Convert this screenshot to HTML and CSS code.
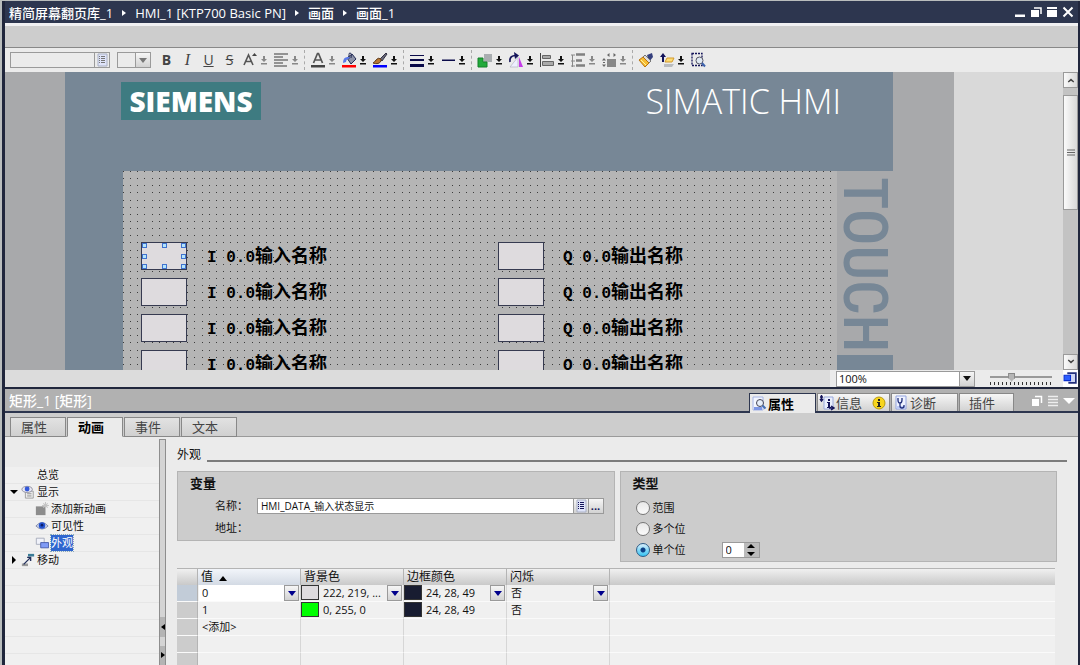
FILE: index.html
```html
<!DOCTYPE html>
<html lang="zh-CN">
<head>
  <meta charset="UTF-8">
  <meta name="viewport" content="width=device-width, initial-scale=1.0">
  <title>画面_1</title>
  <link rel="stylesheet" href="styles.css">
</head>
<body>
  <svg class="sprite" aria-hidden="true">
    <symbol id="drop" viewBox="0 0 8 16">
      <path d="M3 4h2v3h2L4 10 1 7h2zM1 11h6v1.5H1z" fill="currentColor"/>
    </symbol>
    <symbol id="caret" viewBox="0 0 8 5">
      <path d="M0 0h8L4 5z" fill="currentColor"/>
    </symbol>
    <symbol id="list" viewBox="0 0 14 14">
      <path d="M3 1h9v12H3z" fill="#dfe4fa" stroke="#a9b0c4"/>
      <path d="M4 3.500h1m1 0h4M4 5.500h1m1 0h4M4 7.500h1m1 0h4M4 9.500h1m1 0h4" stroke="currentColor"/>
    </symbol>
  </svg>

  <div class="window">
    <header class="titlebar">
      <nav class="path">
        <a href="#">精简屏幕翻页库_1</a><i></i>
        <a href="#">HMI_1 [KTP700 Basic PN]</a><i></i>
        <a href="#">画面</a><i></i>
        <a href="#">画面_1</a>
      </nav>
      <div class="win-buttons">
        <button aria-label="最小化"><svg viewBox="0 0 12 12"><path d="M1 8.500h10V11H1z" fill="#fff"/></svg></button>
        <button aria-label="还原"><svg viewBox="0 0 12 12"><path d="M1 4h8v7H1z" fill="#fff"/><path d="M4 2h7v6" fill="none" stroke="#fff" stroke-width="1.5"/></svg></button>
        <button aria-label="最大化"><svg viewBox="0 0 12 12"><path d="M1 1h10v2H1zM1 4h10v7H1z" fill="#fff"/></svg></button>
        <button aria-label="关闭"><svg viewBox="0 0 12 12"><path d="M1.500 1.500l9 9m0-9l-9 9" stroke="#fff" stroke-width="2"/></svg></button>
      </div>
    </header>
    <div class="strip"></div>

    <div class="toolbar">
      <div class="font-name">
        <input type="text" aria-label="字体"><button aria-label="选择字体"><svg width="14" height="14"><use href="#list"/></svg></button>
      </div>
      <div class="font-size">
        <select aria-label="字号"><option></option></select><span class="arrow"><svg width="8" height="5"><use href="#caret"/></svg></span>
      </div>
      <button class="tool letter"><b>B</b></button>
      <button class="tool letter"><em>I</em></button>
      <button class="tool letter"><u>U</u></button>
      <button class="tool letter"><s>S</s></button>
      <button class="tool pair off" aria-label="字体大小">
        <svg class="icon" viewBox="0 0 16 16"><path d="M2 13L6.500 3 11 13M3.500 9.500h6" fill="none" stroke="#555" stroke-width="1.6"/><path d="M10 4l2.500-3L15 4z" fill="#444"/></svg>
        <svg class="drop"><use href="#drop"/></svg>
      </button>
      <button class="tool pair off" aria-label="对齐">
        <svg class="icon" viewBox="0 0 16 16"><path d="M1 2h14M1 5h9M1 8h14M1 11h9M1 14h13" stroke="#777" stroke-width="1.5"/></svg>
        <svg class="drop"><use href="#drop"/></svg>
      </button>
      <span class="sep"></span>
      <button class="tool pair off" aria-label="文本颜色">
        <svg class="icon" viewBox="0 0 16 16"><path d="M3.500 11L7.500 1.500h1L12.500 11M5 8h6" fill="none" stroke="#555" stroke-width="1.7"/><path d="M1 13h14v2.500H1z" fill="#444"/></svg>
        <svg class="drop"><use href="#drop"/></svg>
      </button>
      <button class="tool pair" aria-label="背景颜色">
        <svg class="icon" viewBox="0 0 16 16"><path d="M6 6l5-4 4 5-5 5z" fill="#8d93a8" stroke="#222a55"/><path d="M8 7V2.500q0-2 1.500-1.500T10 6" fill="none" stroke="#222a55"/><path d="M8 5Q2 4 2 11l3-1q0-3 4-4z" fill="#5b79ea"/><path d="M1 13h14v2.500H1z" fill="red"/></svg>
        <svg class="drop"><use href="#drop"/></svg>
      </button>
      <button class="tool pair" aria-label="边框颜色">
        <svg class="icon" viewBox="0 0 16 16"><path d="M8 7l6-6 1 1-5 7z" fill="#667" stroke="#334"/><path d="M9 7q-3-2-5 1t-3 3q6 2 8-2z" fill="#b87834" stroke="#5c3a1c"/><path d="M1 13h14v2.500H1z" fill="#00f"/></svg>
        <svg class="drop"><use href="#drop"/></svg>
      </button>
      <span class="sep"></span>
      <button class="tool pair" aria-label="线宽">
        <svg class="icon" viewBox="0 0 16 16"><path d="M1 3h14v1H1zM1 7h14v2H1zM1 12h14v3H1z" fill="#0b0b4a"/></svg>
        <svg class="drop"><use href="#drop"/></svg>
      </button>
      <button class="tool pair" aria-label="线型">
        <svg class="icon" viewBox="0 0 16 16"><path d="M2 7.500h13v1.500H2z" fill="#0b0b4a"/></svg>
        <svg class="drop"><use href="#drop"/></svg>
      </button>
      <span class="sep"></span>
      <button class="tool pair" aria-label="层级">
        <svg class="icon" viewBox="0 0 16 16"><path d="M7 2h8v8H7z" fill="#a9adb0"/><path d="M1 6h5v4h4v5H1z" fill="#22aa3b" stroke="#15802a"/></svg>
        <svg class="drop"><use href="#drop"/></svg>
      </button>
      <button class="tool pair" aria-label="旋转">
        <svg class="icon" viewBox="0 0 16 16"><path d="M2 10Q1 4 7 3.500" fill="none" stroke="#14145a" stroke-width="1.7"/><path d="M6 0l5 3.500L7 7z" fill="#14145a"/><path d="M10 5v10H2z" fill="#eef" stroke="#aab" stroke-width=".6"/><path d="M11 5l4 10h-4z" fill="#c43ce8"/></svg>
        <svg class="drop"><use href="#drop"/></svg>
      </button>
      <button class="tool pair" aria-label="左对齐">
        <svg class="icon" viewBox="0 0 16 16"><path d="M1.500 1v14" stroke="#444"/><path d="M3.500 3.500h8v3h-8zM3.500 9.500h11v4h-11z" fill="#aaa" stroke="#666"/></svg>
        <svg class="drop"><use href="#drop"/></svg>
      </button>
      <button class="tool pair off" aria-label="分布">
        <svg class="icon" viewBox="0 0 16 16"><path d="M2.500 3v12M1 3h4M1 9h4M1 14h4" stroke="#888"/><path d="M6 2.500h9M6 8.500h6M6 13.500h9" stroke="#808080" stroke-width="2.500"/></svg>
        <svg class="drop"><use href="#drop"/></svg>
      </button>
      <button class="tool pair off" aria-label="尺寸">
        <svg class="icon" viewBox="0 0 16 16"><path d="M6 7h9v8H6z" fill="#888"/><path d="M6 3l2.500-2v4zM15 3l-2.500-2v4zM3 6L1 8.500h4zM3 15l-2-2.500h4z" fill="#666"/><path d="M2 10.500h2" stroke="#666"/></svg>
        <svg class="drop"><use href="#drop"/></svg>
      </button>
      <span class="sep"></span>
      <button class="tool" aria-label="格式刷">
        <svg class="icon" viewBox="0 0 16 16"><path d="M9 3l5-2 1 4-4 5z" fill="#35407e"/><path d="M7 3l6 6-2 2-6-6z" fill="#ddd" stroke="#777"/><path d="M5 5l6 6-4 4-6-7z" fill="#f7bd32" stroke="#b87310"/><path d="M3 8l5 5" stroke="#fff3a0"/></svg>
      </button>
      <button class="tool pair" aria-label="图层">
        <svg class="icon" viewBox="0 0 16 16"><path d="M5 12h10l-2 3H5z" fill="#b9bcc0"/><path d="M8 6h7l-2 4H6z" fill="#fbdc77" stroke="#d59b2a"/><path d="M1 5l3-4 3 4H5v5H3V5z" fill="#14145a"/></svg>
        <svg class="drop"><use href="#drop"/></svg>
      </button>
      <button class="tool" aria-label="缩放选区">
        <svg class="icon" viewBox="0 0 16 16"><path d="M2 1.500h10v12H2z" fill="none" stroke="#14145a" stroke-width="1.3" stroke-dasharray="2 1"/><circle cx="9.500" cy="8.500" r="3.500" fill="#dfe8f2" stroke="#556"/><path d="M12 11l3 3.500" stroke="#3c63ad" stroke-width="2"/></svg>
      </button>
    </div>

    <main class="editor">
      <div class="canvas">
        <div class="device">
          <div class="panel">
            <div class="panel-head">
              <span class="logo">SIEMENS</span>
              <span class="product">SIMATIC HMI</span>
            </div>
            <div class="panel-body">
              <div class="screen">
                <svg class="dots" aria-hidden="true">
                  <pattern id="grid" width="50" height="50" patternUnits="userSpaceOnUse">
                    <path d="M0 .5h50M0 7.500h50M0 14.500h50M0 21.500h50M0 29.500h50M0 36.500h50M0 43.500h50" stroke="#3c3c3c" stroke-dasharray="1 6 1 6 1 6 1 7 1 6 1 6 1 6"/>
                  </pattern>
                  <rect width="100%" height="100%" fill="url(#grid)"/>
                </svg>
                <div class="io">
                  <span class="lamp selected"><i></i><i></i><i></i><i></i><i></i><i></i><i></i><i></i></span>
                  <span class="name"><code>I 0.0</code>输入名称</span>
                  <span class="lamp"></span>
                  <span class="name"><code>Q 0.0</code>输出名称</span>
                  <span class="lamp"></span>
                  <span class="name"><code>I 0.0</code>输入名称</span>
                  <span class="lamp"></span>
                  <span class="name"><code>Q 0.0</code>输出名称</span>
                  <span class="lamp"></span>
                  <span class="name"><code>I 0.0</code>输入名称</span>
                  <span class="lamp"></span>
                  <span class="name"><code>Q 0.0</code>输出名称</span>
                  <span class="lamp"></span>
                  <span class="name"><code>I 0.0</code>输入名称</span>
                  <span class="lamp"></span>
                  <span class="name"><code>Q 0.0</code>输出名称</span>
                </div>
              </div>
              <div class="side"><span>TOUCH</span></div>
            </div>
          </div>
        </div>
      </div>
      <div class="scrollbar">
        <button aria-label="向上"><svg viewBox="0 0 10 8"><path d="M1 6l4-4 4 4-1 1-3-2-3 2z" fill="#444"/></svg></button>
        <div class="thumb"><svg viewBox="0 0 8 8"><path d="M0 1h8M0 3.500h8M0 6h8" stroke="#666" stroke-width="1.2"/></svg></div>
        <button aria-label="向下"><svg viewBox="0 0 10 8"><path d="M1 2l4 4 4-4-1-1-3 2-3-2z" fill="#444"/></svg></button>
      </div>
    </main>

    <div class="zoombar">
      <div class="zoom">
        <select aria-label="缩放"><option>100%</option></select><span class="arrow"><svg width="8" height="5"><use href="#caret"/></svg></span>
      </div>
      <input class="slider" type="range" min="0" max="100" value="33" aria-label="缩放比例">
      <button class="overview" aria-label="总览"><svg viewBox="0 0 14 14"><path d="M4 2h8v9H5" fill="#cfd6f2" stroke="#23307c" stroke-width="1.6"/><path d="M1 4h6v5H1z" fill="#2a5cff" stroke="#0a2fd0"/></svg></button>
    </div>

    <section class="inspector">
      <div class="inspector-head">
        <h1>矩形_1 [矩形]</h1>
        <div class="views">
          <button class="view active">
            <svg viewBox="0 0 16 16"><path d="M2 1h10v13H2z" fill="#f3f6ff" stroke="#a6b4e6"/><path d="M3 11h8v3H3z" fill="#7d97e6"/><circle cx="9" cy="7" r="3.500" fill="#e6eefa" stroke="#445"/><path d="M11.500 9.500l3 3" stroke="#456fb5" stroke-width="2"/></svg>属性
          </button>
          <button class="view message">
            <svg viewBox="0 0 16 16"><path d="M5 2h9v12H5z" fill="#e9eefc" stroke="#9aa9dd"/><path d="M9 4h2v2H9zM8 7h3v5h1v1H8v-1h1V8H8z" fill="#14145a"/><path d="M1 2h3M2.500 0v6M1 4l1.500 2L4 4M10 13h4m-2-2l3 2-3 2" fill="none" stroke="#14145a" stroke-width="1.4"/></svg>信息
            <svg class="info" viewBox="0 0 16 16"><circle cx="8" cy="8" r="6" fill="#f7d51d" stroke="#b89a10"/><path d="M7 4h2v2H7zM6 7h3v4h1v1H6v-1h1V8H6z" fill="#222"/></svg>
          </button>
          <button class="view">
            <svg viewBox="0 0 16 16"><path d="M3 1h10v13H3z" fill="#eef2ff" stroke="#93a4e0"/><path d="M4 11h8v3H4z" fill="#bccaf6"/><path d="M5 3v2q0 3 2 3t2-3V3M7 8v3q0 2 2 2t2-2v-1" fill="none" stroke="#23307c" stroke-width="1.300"/></svg>诊断
          </button>
          <button class="view plain">插件</button>
        </div>
        <div class="dock">
          <button aria-label="浮动"><svg viewBox="0 0 12 12"><path d="M1 4h7v7H1z" fill="#fff"/><path d="M4 1.500h6.500V8" fill="none" stroke="#fff" stroke-width="1.500"/></svg></button>
          <button aria-label="布局"><svg viewBox="0 0 12 12"><path d="M1 1.500h10M1 4.500h10M1 7.500h10M1 10.500h10" stroke="#eee" stroke-width="1.300"/></svg></button>
          <button aria-label="折叠"><svg viewBox="0 0 12 12"><path d="M0 3h12L6 9z" fill="#fff"/></svg></button>
        </div>
      </div>

      <div class="tabs">
        <button>属性</button>
        <button class="active">动画</button>
        <button>事件</button>
        <button>文本</button>
      </div>

      <div class="split">
        <ul class="tree">
          <li><a href="#">总览</a></li>
          <li>
            <svg class="twist" viewBox="0 0 8 8"><path d="M0 2h8L4 6z"/></svg>
            <svg class="icon" viewBox="0 0 16 16"><path d="M5 7h9v8H5z" fill="#ececec" stroke="#999"/><path d="M7 10h5M7 12.500h5" stroke="#888"/><ellipse cx="7" cy="5" rx="6" ry="3.500" fill="#e8e8f4" stroke="#889"/><circle cx="7" cy="4.500" r="2.800" fill="#3358d8"/></svg>
            <a href="#">显示</a>
          </li>
          <li class="child">
            <svg class="icon" viewBox="0 0 16 16"><path d="M1 5h11v10H1z" fill="#8c8c8c"/><path d="M12 0v8M8 4h8M9.500 1.500l5 5m0-5l-5 5" stroke="#c4c4c4" stroke-width="1.200"/></svg>
            <a href="#">添加新动画</a>
          </li>
          <li class="child">
            <svg class="icon" viewBox="0 0 16 16"><path d="M1 8q7-8 14 0-7 7-14 0z" fill="#cfd6ea" stroke="#7b86a8"/><circle cx="8" cy="7.500" r="3.700" fill="#2352d0"/><circle cx="8" cy="7" r="1.500" fill="#0a1e6a"/></svg>
            <a href="#">可见性</a>
          </li>
          <li class="child">
            <svg class="icon" viewBox="0 0 16 16"><path d="M1.500 2.500h9v7h-9z" fill="#f0f2fa" stroke="#a4a8b8"/><path d="M6.500 7.500h9v6h-9z" fill="#7f9af5" stroke="#4257a8"/></svg>
            <a href="#" class="current">外观</a>
          </li>
          <li>
            <svg class="twist" viewBox="0 0 8 8"><path d="M2 0v8l4-4z"/></svg>
            <svg class="icon" viewBox="0 0 16 16"><path d="M8 1h7v3H8z" fill="#3b7c96"/><path d="M1 12h7v3H1z" fill="#999"/><path d="M3 13L11 5M7 5h4v4" fill="none" stroke="#23305c" stroke-width="1.600"/></svg>
            <a href="#">移动</a>
          </li>
          <li></li><li></li><li></li><li></li><li></li><li></li>
        </ul>
        <div class="splitter">
          <button aria-label="收起"><svg viewBox="0 0 4 6"><path d="M4 0v6L0 3z"/></svg></button>
          <button aria-label="展开"><svg viewBox="0 0 4 6"><path d="M0 0v6l4-3z"/></svg></button>
        </div>

        <div class="content">
          <h2>外观</h2>
          <div class="groups">
            <fieldset class="group variable">
              <h3>变量</h3>
              <div class="field">
                <label for="tag">名称：</label>
                <div class="tag-box">
                  <input id="tag" type="text" value="HMI_DATA_输入状态显示">
                  <button aria-label="选择变量"><svg width="14" height="14"><use href="#list"/></svg></button>
                  <button>...</button>
                </div>
              </div>
              <div class="field"><span class="label">地址：</span></div>
            </fieldset>
            <fieldset class="group type">
              <h3>类型</h3>
              <label><input type="radio" name="type">范围</label>
              <label><input type="radio" name="type">多个位</label>
              <div class="single">
                <label><input type="radio" name="type" checked>单个位</label>
                <div class="spin">
                  <input type="text" value="0" aria-label="位号">
                  <button aria-label="增减"><svg viewBox="0 0 8 12"><path d="M4 0l4 4H0zM4 12l4-4H0z"/></svg></button>
                </div>
              </div>
            </fieldset>
          </div>

          <table>
            <colgroup><col class="mark"><col class="c"><col class="c"><col class="c"><col class="c"><col></colgroup>
            <thead>
              <tr>
                <th></th>
                <th class="sorted">值 <svg width="8" height="5" viewBox="0 0 8 5"><path d="M0 5l4-5 4 5z"/></svg></th>
                <th>背景色</th>
                <th>边框颜色</th>
                <th>闪烁</th>
                <th></th>
              </tr>
            </thead>
            <tbody>
              <tr class="current">
                <td></td>
                <td><div class="pick edit"><select aria-label="值"><option>0</option></select><span class="arrow"><svg width="8" height="5"><use href="#caret"/></svg></span></div></td>
                <td><div class="pick"><span class="swatch grey"></span><select aria-label="背景色"><option>222, 219, ...</option></select><span class="arrow"><svg width="8" height="5"><use href="#caret"/></svg></span></div></td>
                <td><div class="pick"><span class="swatch navy"></span><select aria-label="边框颜色"><option>24, 28, 49</option></select><span class="arrow"><svg width="8" height="5"><use href="#caret"/></svg></span></div></td>
                <td><div class="pick"><select aria-label="闪烁"><option>否</option></select><span class="arrow"><svg width="8" height="5"><use href="#caret"/></svg></span></div></td>
                <td></td>
              </tr>
              <tr>
                <td></td>
                <td>1</td>
                <td><div class="pick"><span class="swatch green"></span>0, 255, 0</div></td>
                <td><div class="pick"><span class="swatch navy"></span>24, 28, 49</div></td>
                <td>否</td>
                <td></td>
              </tr>
              <tr><td></td><td>&lt;添加&gt;</td><td></td><td></td><td></td><td></td></tr>
              <tr><td></td><td></td><td></td><td></td><td></td><td></td></tr>
              <tr><td></td><td></td><td></td><td></td><td></td><td></td></tr>
            </tbody>
          </table>
        </div>
      </div>
    </section>
  </div>
</body>
</html>
```
FILE: styles.css
```css
:root {
  --navy: #2d364f;
  --edge: #20263c;
  --slate: #778796;
  --device: #a8a9ab;
  --bar: #cdcdcd;
  --face: #ebebeb;
  --line: #9a9a9a;
  --raised: linear-gradient(#f6f6f6, #d2d2d2);
}

* {
  box-sizing: border-box;
  margin: 0;
  padding: 0;
}

body {
  height: 100vh;
  overflow: hidden;
  padding: 1px 0 0 2px;
  background: #b9bdbd;
  color: #111;
  font: 11px/16px "Open Sans", "Noto Sans CJK SC", sans-serif;
}

button,
input,
select {
  font: inherit;
  color: inherit;
  border: none;
  border-radius: 0;
  background: none;
  outline: none;
}

input,
select {
  min-width: 0;
}

select {
  appearance: none;
}

a {
  color: inherit;
  text-decoration: none;
}

svg {
  display: block;
  flex: none;
}

.sprite {
  position: absolute;
  width: 0;
  height: 0;
}

.window {
  display: flex;
  flex-direction: column;
  height: 100%;
  border: solid var(--edge);
  border-width: 0 2px 0 3px;
}

/* title bar */
.titlebar {
  display: flex;
  justify-content: space-between;
  align-items: center;
  flex: none;
  height: 22px;
  padding: 0 4px;
  background: var(--navy);
  color: #fff;
}

.path {
  display: flex;
  align-items: center;
  gap: 9px;
  padding-top: 1px;
  font-size: 13px;
  font-weight: 500;
}

.path i {
  border: solid transparent;
  border-width: 3px 0 3px 4px;
  border-left-color: #fff;
}

.win-buttons {
  display: flex;
  gap: 4px;
}

.win-buttons svg {
  width: 12px;
  height: 12px;
}

.strip {
  flex: none;
  height: 25px;
  background: var(--bar);
  border-top: 3px solid #f0f0f2;
  border-bottom: 1px solid #888;
}

/* toolbar */
.toolbar {
  display: flex;
  align-items: center;
  flex: none;
  height: 24px;
  padding-left: 5px;
  background: var(--face);
}

.font-name,
.font-size {
  display: flex;
  height: 16px;
  border: 1px solid var(--line);
}

.font-name {
  width: 100px;
  margin-right: 7px;
  color: #777;
}

.font-name input {
  flex: 1;
}

.font-name button {
  width: 15px;
  border-left: 1px solid var(--line);
}

.font-size {
  width: 34px;
  margin-right: 5px;
}

.font-size select {
  flex: 1;
}

.arrow {
  display: flex;
  align-items: center;
  justify-content: center;
  flex: none;
  width: 15px;
  border-left: 1px solid var(--line);
  background: var(--raised);
}

.font-size .arrow {
  color: #777;
}

.tool {
  display: flex;
  align-items: center;
  flex: none;
  width: 21px;
  height: 20px;
}

.tool .icon {
  width: 16px;
  height: 16px;
}

.letter {
  justify-content: center;
  color: #444;
  font-size: 14px;
  font-weight: 500;
}

.letter em {
  font-family: "Liberation Serif", serif;
  font-size: 16px;
}

.pair {
  width: 31px;
  gap: 2px;
}

.letter + .pair {
  margin-left: 2px;
}

.drop {
  width: 8px;
  height: 16px;
}

.off .drop {
  color: #888;
}

.sep {
  height: 20px;
  margin-right: 5px;
  border-left: 1px dashed #aaa;
}

/* screen editor */
.editor {
  display: flex;
  flex: none;
  height: 298px;
}

.canvas {
  flex: 1;
  overflow: hidden;
  background: #d9d9d9;
}

.device {
  width: 949px;
  padding: 0 61px 0 60px;
  background: var(--device);
}

.panel {
  background: var(--slate);
}

.panel-head {
  display: flex;
  justify-content: space-between;
  align-items: flex-start;
  height: 99px;
  padding: 10px 52px 0 56px;
  color: #fff;
}

.logo {
  width: 140px;
  background: #3e7b81;
  text-align: center;
  font: 800 28px/38px "Open Sans", sans-serif;
}

.product {
  font: 300 34px/38px "Open Sans", sans-serif;
}

.panel-body {
  display: flex;
  padding-left: 58px;
}

.screen {
  position: relative;
  flex: 1;
  height: 240px;
  background: #b5b5b5;
}

.dots {
  position: absolute;
  width: 100%;
  height: 100%;
}

.io {
  position: relative;
  display: grid;
  grid-template-columns: 66px 291px 65px auto;
  grid-auto-rows: 28px;
  row-gap: 8px;
  padding: 71px 0 0 18px;
}

.lamp {
  width: 46px;
  background: #dedbde;
  border: 1px solid #363a50;
}

.selected {
  display: grid;
  grid-template-columns: repeat(3, 5px);
  justify-content: space-between;
  align-content: space-between;
}

.selected i {
  height: 5px;
  background: #b4e4fb;
  border: 1px solid #3f72cf;
}

.selected i:nth-child(5) {
  grid-column: 3;
}

.name {
  color: #000;
  font: 700 18px/24px "Noto Sans CJK SC", sans-serif;
}

.name code {
  font: 700 16px/24px "Liberation Mono", monospace;
}

.side {
  width: 56px;
  height: 184px;
  padding-top: 6px;
  background: var(--device);
  color: var(--slate);
  text-align: center;
}

.side span {
  writing-mode: vertical-rl;
  font: 500 61px/56px "Roboto Condensed", "Liberation Sans Narrow", sans-serif;
}

.scrollbar {
  display: flex;
  flex-direction: column;
  align-items: stretch;
  width: 15px;
  background: #c3c3c3;
}

.scrollbar button,
.thumb {
  display: grid;
  place-items: center;
  height: 16px;
  background: linear-gradient(90deg, #fafafa, #d8d8d8);
  border: 1px solid var(--line);
}

.scrollbar svg {
  width: 8px;
  height: 8px;
}

.scrollbar .thumb {
  height: 115px;
  margin: 7px 0 auto;
}

.zoombar {
  display: flex;
  align-items: center;
  justify-content: flex-end;
  flex: none;
  height: 17px;
  background: linear-gradient(90deg, #dcdcdc calc(100% - 248px), var(--face) 0);
}

.zoom {
  display: flex;
  width: 139px;
  height: 16px;
  margin-right: 15px;
  background: #fff;
  border: 1px solid var(--line);
  line-height: 13px;
}

.zoom select {
  flex: 1;
  height: 14px;
  padding-left: 2px;
}

.slider {
  appearance: none;
  width: 62px;
  height: 15px;
  margin-right: 11px;
  background:
    linear-gradient(#999, #999) 0 5px / 100% 2px no-repeat,
    repeating-linear-gradient(90deg, #333 0 1px, transparent 1px 4px) 0 11px / 100% 3px no-repeat;
}

.slider::-webkit-slider-thumb {
  appearance: none;
  width: 7px;
  height: 9px;
  margin-bottom: 3px;
  background: #b5b5b5;
  border: 1px solid #888;
  clip-path: polygon(0 0, 100% 0, 100% 60%, 50% 100%, 0 60%);
}

.overview {
  width: 15px;
  height: 17px;
  background: #fff;
}

/* inspector */
.inspector {
  display: flex;
  flex-direction: column;
  flex: 1;
  min-height: 0;
  border-top: 2px solid var(--edge);
  background: var(--face);
}

.inspector-head {
  display: flex;
  flex: none;
  height: 24px;
  padding: 4px 3px 0 4px;
  background: #b1b1b1;
  border-bottom: 2px solid var(--navy);
}

h1 {
  flex: 1;
  color: #fff;
  font-size: 14px;
  font-weight: 500;
}

.views {
  display: flex;
  gap: 1px;
}

.view {
  display: flex;
  align-items: center;
  gap: 1px;
  width: 67px;
  height: 18px;
  padding-left: 1px;
  background: var(--raised);
  border: 1px solid #888;
  border-bottom: none;
  color: #444;
  font-size: 13px;
}

.view svg {
  width: 16px;
  height: 16px;
}

.message {
  width: 73px;
}

.view .info {
  margin-left: 8px;
}

.plain {
  width: 55px;
  padding-left: 9px;
}

.view.active {
  height: 20px;
  background: var(--face);
  border-color: var(--navy);
  color: #000;
  font-weight: 700;
}

.dock {
  display: flex;
  align-items: flex-start;
  gap: 4px;
  margin-left: 17px;
  padding-top: 2px;
}

.dock svg {
  width: 12px;
  height: 12px;
}

.tabs {
  display: flex;
  align-items: flex-end;
  flex: none;
  gap: 1px;
  height: 24px;
  padding-left: 5px;
  background: linear-gradient(var(--line), var(--line)) bottom / 100% 1px no-repeat var(--bar);
}

.tabs button {
  width: 56px;
  height: 20px;
  padding-right: 8px;
  background: linear-gradient(#e2e2e2, #d0d0d0);
  border: 1px solid #888;
  color: #444;
  font-size: 13px;
  line-height: 16px;
}

.tabs .active {
  background: var(--face);
  border-bottom-color: var(--face);
  color: #000;
  font-weight: 700;
}

.split {
  display: flex;
  flex: 1;
  min-height: 0;
  overflow: hidden;
}

.tree {
  flex: none;
  width: 154px;
  padding-top: 30px;
  list-style: none;
}

.tree li {
  display: flex;
  align-items: center;
  height: 17px;
  padding-left: 5px;
  background: #f0f0f0;
  border-bottom: 1px solid #e6e6e6;
}

.tree .twist {
  width: 8px;
  height: 8px;
  margin-right: 3px;
}

.tree .icon {
  width: 14px;
  height: 14px;
  margin-right: 2px;
}

.tree li:first-child {
  padding-left: 32px;
}

.tree .child {
  padding-left: 30px;
}

.tree .current {
  background: #2f66cf;
  color: #fff;
  outline: 1px dotted #8ab;
}

.splitter {
  display: flex;
  flex-direction: column;
  flex: none;
  gap: 9px;
  width: 7px;
  margin-top: 2px;
  padding-top: 177px;
  background: #d4d4d4;
  border: solid #8e8e8e;
  border-width: 1px 1px 0;
}

.splitter button {
  display: grid;
  place-items: center;
  height: 21px;
  background: #b4b4b4;
}

.splitter svg {
  width: 4px;
  height: 6px;
}

.content {
  flex: 1;
  min-width: 0;
  padding: 9px 11px 0;
}

h2 {
  display: flex;
  gap: 6px;
  font-size: 12px;
  font-weight: 400;
  line-height: 18px;
}

h2::after {
  content: "";
  flex: 1;
  height: 2px;
  margin-top: 14px;
  background: #7c7c7c;
}

.groups {
  display: grid;
  grid-template-columns: 1fr 1fr;
  align-items: start;
  gap: 5px;
  margin: 7px 10px 0 0;
}

.group {
  min-width: 0;
  padding: 3px 10px 0 12px;
  background: #ccc;
  border: 1px solid #b4b4b4;
}

.variable {
  height: 70px;
}

.type {
  height: 91px;
}

h3 {
  margin-bottom: 4px;
  font-size: 13px;
  font-weight: 700;
}

.type h3 {
  margin-bottom: 6px;
}

.field {
  display: flex;
  align-items: center;
  height: 22px;
  padding-left: 25px;
}

.field label,
.field .label {
  width: 42px;
}

.tag-box {
  display: flex;
  flex: 1;
  height: 16px;
  background: #fff;
  border: 1px solid var(--line);
}

.tag-box input {
  flex: 1;
  padding-left: 3px;
  font-size: 10px;
}

.tag-box button {
  width: 15px;
  background: var(--raised);
  border-left: 1px solid var(--line);
  color: #14145a;
  font-weight: 700;
  line-height: 12px;
}

.type label {
  display: flex;
  align-items: center;
  gap: 3px;
  height: 21px;
  padding-left: 3px;
}

.type input[type="radio"] {
  appearance: none;
  width: 14px;
  height: 14px;
  background: linear-gradient(#e8e8e8, #fafafa);
  border: 1px solid #777;
  border-radius: 50%;
}

.type input[type="radio"]:checked {
  background: radial-gradient(#0b3f86 0 2px, transparent 3px), linear-gradient(#d8eefb, #35c3f3);
  border-color: #2d5d88;
}

.single {
  display: flex;
  align-items: center;
  justify-content: flex-start;
}

.single label {
  width: 89px;
}

.spin {
  display: flex;
  width: 38px;
  height: 16px;
  background: #fff;
  border: 1px solid var(--line);
}

.spin input {
  flex: 1;
  padding-left: 3px;
}

.spin button {
  display: grid;
  place-items: center;
  width: 15px;
  background: #bbb;
}

.spin svg {
  width: 8px;
  height: 12px;
}

table {
  width: calc(100% - 12px);
  margin-top: 6px;
  border-collapse: separate;
  border-spacing: 0;
  table-layout: fixed;
}

.mark {
  width: 21px;
}

.c {
  width: 103px;
}

th {
  height: 17px;
  padding-left: 3px;
  background: linear-gradient(#f0f0f0, #c9c9c9);
  border: solid #b4b4b4;
  border-width: 1px 1px 0 0;
  font-size: 12px;
  font-weight: 400;
  line-height: 16px;
  text-align: left;
}

th.sorted {
  background: linear-gradient(#f2f5fa, #d3dae4);
}

th svg {
  display: inline-block;
  margin-left: 3px;
}

td {
  height: 17px;
  padding: 0 1px 0 4px;
  background: #f0f0f0;
  border: solid #fafafa;
  border-width: 0 1px 1px 0;
  border-right-color: #d6d6d6;
}

td:first-child {
  background: #ccc;
  border-right-color: #b4b4b4;
}

td:last-child,
th:last-child {
  border-right: none;
}

.current td:first-child {
  background: #c2ccd8;
}

.pick {
  display: flex;
  height: 16px;
}

.pick select {
  flex: 1;
}

.pick .arrow {
  border: 1px solid var(--line);
  color: #00008b;
}

.edit {
  margin-left: -3px;
  padding-left: 3px;
  background: #fff;
}

.swatch {
  width: 18px;
  height: 15px;
  margin: 0 4px 0 -4px;
  border: 1px solid #333;
}

.grey {
  background: #dedbde;
}

.green {
  background: #0f0;
}

.navy {
  background: #181c31;
}
```
